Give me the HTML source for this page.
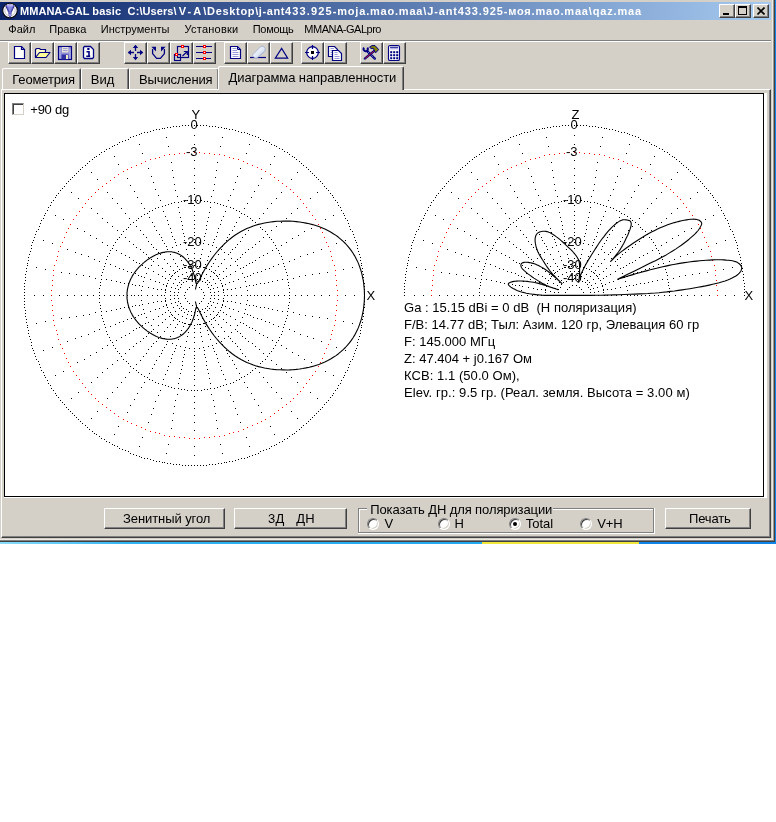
<!DOCTYPE html>
<html><head><meta charset="utf-8"><title>MMANA-GAL</title><style>
*{box-sizing:border-box}
html,body{margin:0;padding:0}
body{width:776px;height:822px;background:#fff;position:relative;overflow:hidden;font-family:"Liberation Sans",sans-serif;color:#000}
.a{position:absolute}
#desk{left:0;top:0;width:776px;height:544px;background:#0f85ea}
#win{left:0;top:0;width:775px;height:542px;background:#d4d0c8;will-change:transform}
#title{left:0;top:2px;width:771px;height:18px;background:linear-gradient(90deg,#0a246a,#a6caf0)}
.tt{top:3px;font-weight:bold;font-size:11px;line-height:16px;color:#fff;white-space:pre}
.cb{top:4px;width:16px;height:14px;background:#d4d0c8;border:1px solid;border-color:#fff #404040 #404040 #fff;box-shadow:inset -1px -1px 0 #808080}
.menu{top:21.5px;font-size:11px;line-height:14px;white-space:pre}
.tb{top:42px;width:23px;height:22px;background:#d4d0c8;border:1px solid;border-color:#fff #404040 #404040 #fff;box-shadow:inset -1px -1px 0 #808080}
.tab{font-size:13px;white-space:pre;line-height:15px}
.btn{background:#d4d0c8;border:1px solid;border-color:#fff #404040 #404040 #fff;box-shadow:inset -1px -1px 0 #808080}
.info{left:404px;font-size:13px;line-height:17px;white-space:pre}
.lbl{font-size:13px;line-height:13px;white-space:pre}
.radio{width:12px;height:12px;border-radius:50%;background:#fff;border:1px solid;border-color:#808080 #fff #fff #808080;box-shadow:inset 1px 1px 0 #404040,inset -1px -1px 0 #d4d0c8;transform:rotate(0deg)}
.rl{font-size:12px;line-height:14px;white-space:pre}
</style></head><body>
<div id="desk" class="a"></div>
<div class="a" style="left:0;top:542px;width:482px;height:2px;background:linear-gradient(90deg,#8adcf8 0,#30b4f4 130px,#22a8f0 482px)"></div>
<div class="a" style="left:482px;top:542px;width:157px;height:2px;background:#f0e63c"></div>
<div id="win" class="a">
<div class="a" style="left:771px;top:0;width:4px;height:542px;background:#d4d0c8"></div>
<div class="a" style="left:772px;top:0;width:1px;height:540px;background:#ece9e2"></div>
<div class="a" style="left:773px;top:0;width:1px;height:541px;background:#9c9890"></div>
<div class="a" style="left:774px;top:0;width:1px;height:542px;background:#404040"></div>
<div class="a" style="left:0;top:539px;width:773px;height:1px;background:#ece9e2"></div>
<div class="a" style="left:0;top:540px;width:774px;height:1px;background:#808080"></div>
<div class="a" style="left:0;top:541px;width:775px;height:1px;background:#404040"></div>
<div id="title" class="a"></div>
<svg class="a" style="left:2px;top:2px" width="17" height="18" viewBox="2 2 17 18"><circle cx="10" cy="10.6" r="7.3" fill="#fff" stroke="#0a0a14" stroke-width="1.1"/><circle cx="10" cy="10.6" r="5.2" fill="none" stroke="#b8b8c0" stroke-width=".9"/><path d="M5.8 6Q10 3.6 14.2 6L11.2 12.6L10.6 16.6H9.4L8.8 12.6Z" fill="#8a8ae6" stroke="#2a2a90" stroke-width=".9" stroke-linejoin="round"/><path d="M7 6.8L9.3 12M13 6.8L10.7 12" stroke="#3c3ca8" stroke-width=".7" fill="none"/><ellipse cx="10" cy="5.6" rx="3.2" ry="1" fill="#b4b4f4"/><circle cx="10" cy="15.2" r="1.1" fill="#9a9af0"/></svg>
<div class="a tt" style="left:20px;letter-spacing:0.039px">MMANA-GAL </div>
<div class="a tt" style="left:92.3px;letter-spacing:0.150px">basic  </div>
<div class="a tt" style="left:127.6px;letter-spacing:0.145px">C:</div>
<div class="a tt" style="left:139.5px;letter-spacing:0.060px">\Users</div>
<div class="a tt" style="left:173.5px;letter-spacing:2.098px">\V-A</div>
<div class="a tt" style="left:203.3px;letter-spacing:0.679px">\Desktop</div>
<div class="a tt" style="left:255.2px;letter-spacing:0.586px">\j-ant</div>
<div class="a tt" style="left:285px;letter-spacing:1.148px">433.925</div>
<div class="a tt" style="left:332.8px;letter-spacing:0.800px">-moja.mao.maa</div>
<div class="a tt" style="left:423.3px;letter-spacing:0.869px">\J-ant433.925</div>
<div class="a tt" style="left:503.7px;letter-spacing:0.808px">-моя.mao.maa</div>
<div class="a tt" style="left:588.8px;letter-spacing:0.841px">\qaz.maa</div>
<div class="a cb" style="left:719px"><div class="a" style="left:3px;top:8px;width:6px;height:2px;background:#000"></div></div>
<div class="a cb" style="left:735px"><div class="a" style="left:2px;top:1px;width:9px;height:9px;border:1px solid #000;border-top-width:2px"></div></div>
<div class="a cb" style="left:753px"><svg class="a" style="left:3px;top:2px" width="8" height="8" viewBox="0 0 8 8"><path d="M0.5 0.5 L7.5 7.5 M7.5 0.5 L0.5 7.5" stroke="#000" stroke-width="1.6"/></svg></div>
<div class="a menu" style="left:8.3px;letter-spacing:0.038px">Файл</div>
<div class="a menu" style="left:49.3px;letter-spacing:0.005px">Правка</div>
<div class="a menu" style="left:100.8px;letter-spacing:0.010px">Инструменты</div>
<div class="a menu" style="left:184.5px;letter-spacing:0.247px">Установки</div>
<div class="a menu" style="left:252.8px;letter-spacing:-0.333px">Помощь</div>
<div class="a menu" style="left:304.3px;letter-spacing:-0.486px">MMANA-GALpro</div>
<div class="a" style="left:0;top:40px;width:771px;height:1px;background:#808080"></div>
<div class="a" style="left:0;top:41px;width:771px;height:1px;background:#fff"></div>
<div class="a tb" style="left:8px"><svg class="a" style="left:-1px;top:-1px" width="23" height="22" viewBox="0 0 23 22"><path d="M6.5 4.5H13.5L16.5 7.5V16.5H6.5Z" fill="#fff" stroke="#000080" stroke-width="1.2"/><path d="M13.5 4.5V7.5H16.5" fill="none" stroke="#000080" stroke-width="1.2"/></svg></div>
<div class="a tb" style="left:31px"><svg class="a" style="left:-1px;top:-1px" width="23" height="22" viewBox="0 0 23 22"><path d="M4.5 15.5V7.5L5.5 6.5H8.5L9.5 7.5H14.5V10" fill="#ffffc8" stroke="#000080" stroke-width="1.2"/><path d="M4.5 15.5L8.5 10.5H19L15 15.5Z" fill="#ffff99" stroke="#000080" stroke-width="1.2" stroke-linejoin="round"/></svg></div>
<div class="a tb" style="left:54px"><svg class="a" style="left:-1px;top:-1px" width="23" height="22" viewBox="0 0 23 22"><rect x="4.5" y="4.5" width="13" height="13" fill="#8f8fd6" stroke="#000080" stroke-width="1.2"/><rect x="8" y="5" width="6.5" height="5.5" fill="#e6e2d6"/><path d="M9 6.5H13.5M9 8.5H13.5" stroke="#a0a0d8" stroke-width="1"/><rect x="7.5" y="12.5" width="7" height="5" fill="#3030a0"/><rect x="12" y="13" width="2" height="4" fill="#f0ecc8"/><path d="M6 5.5V16.5M16 7V16.5" stroke="#b8b8ec" stroke-width="1"/></svg></div>
<div class="a tb" style="left:77px"><svg class="a" style="left:-1px;top:-1px" width="23" height="22" viewBox="0 0 23 22"><path d="M7.5 4.5H13.5L16.5 7.5V15.5L15.5 16.5H7.5L6.5 15.5V5.5Z" fill="#fff" stroke="#000080" stroke-width="1.3"/><rect x="10.3" y="6" width="2.2" height="2" fill="#000080"/><path d="M9.5 9.7H12V14.2M9.3 14.3H13.2" stroke="#000080" stroke-width="1.6" fill="none"/></svg></div>
<div class="a tb" style="left:124px"><svg class="a" style="left:-1px;top:-1px" width="23" height="22" viewBox="0 0 23 22"><path d="M11.5 4V9M11.5 12V17M4.5 10.5H10M13 10.5H18.5" stroke="#000080" stroke-width="1.3" fill="none"/><path d="M11.5 2.8L14.2 6H8.8ZM11.5 18.2L14.2 15H8.8ZM3.8 10.5L7 7.8V13.2ZM19.2 10.5L16 7.8V13.2Z" fill="#000080"/></svg></div>
<div class="a tb" style="left:147px"><svg class="a" style="left:-1px;top:-1px" width="23" height="22" viewBox="0 0 23 22"><path d="M5.6 7V11.6L9.6 16.3H13.4L17.4 11.6V7" stroke="#000080" stroke-width="1.3" fill="none" stroke-linejoin="round"/><path d="M4.4 4.8H9V9.4ZM18.6 4.8H14V9.4Z" fill="#000080"/></svg></div>
<div class="a tb" style="left:170px"><svg class="a" style="left:-1px;top:-1px" width="23" height="22" viewBox="0 0 23 22"><rect x="7.5" y="4.5" width="11" height="11" fill="none" stroke="#000080" stroke-width="1.2"/><rect x="4.5" y="12.5" width="6" height="6" fill="none" stroke="#000080" stroke-width="1.2"/><path d="M12.5 14L17 9.8M13.8 9.5H17.3V13" stroke="#000080" stroke-width="1.2" fill="none"/><rect x="11.5" y="3.5" width="2" height="2" fill="#fff" stroke="#f00" stroke-width="1"/><rect x="5.5" y="11.5" width="2" height="2" fill="#fff" stroke="#f00" stroke-width="1"/></svg></div>
<div class="a tb" style="left:193px"><svg class="a" style="left:-1px;top:-1px" width="23" height="22" viewBox="0 0 23 22"><path d="M3 4.5H19M3 10.5H19M3 16.5H18" stroke="#000080" stroke-width="1.2"/><rect x="10.5" y="3.5" width="2" height="2" fill="#fff" stroke="#f00" stroke-width="1"/><rect x="10.5" y="9.5" width="2" height="2" fill="#fff" stroke="#f00" stroke-width="1"/><rect x="10.5" y="15.5" width="2" height="2" fill="#fff" stroke="#f00" stroke-width="1"/></svg></div>
<div class="a tb" style="left:224px"><svg class="a" style="left:-1px;top:-1px" width="23" height="22" viewBox="0 0 23 22"><path d="M6.5 4.5H13.5L16.5 7.5V16.5H6.5Z" fill="#fff" stroke="#000080" stroke-width="1.2"/><path d="M13.5 4.5V7.5H16.5" fill="none" stroke="#000080" stroke-width="1"/><path d="M8.5 6.5H12.5M8.5 8.5H13M8.5 10.5H14.5M8.5 12.5H14.5M8.5 14.5H14.5" stroke="#9898dc" stroke-width="1"/></svg></div>
<div class="a tb" style="left:247px"><svg class="a" style="left:-1px;top:-1px" width="23" height="22" viewBox="0 0 23 22"><defs><linearGradient id="er" x1="0" y1="0" x2="1" y2="1"><stop offset="0" stop-color="#fff"/><stop offset=".55" stop-color="#e0e8f6"/><stop offset="1" stop-color="#8fa4cc"/></linearGradient></defs><path d="M3 15.5H19" stroke="#000080" stroke-width="1.2"/><path d="M5.8 12.6L13.2 5Q15 3.6 16.8 4.8L18 6.4Q18.8 8 17.4 9.6L10.6 15.6Q9 16.6 7.4 15.6L6 14.4Q5.2 13.4 5.8 12.6Z" fill="url(#er)" stroke="#9cacd0" stroke-width=".8"/></svg></div>
<div class="a tb" style="left:270px"><svg class="a" style="left:-1px;top:-1px" width="23" height="22" viewBox="0 0 23 22"><path d="M11.6 6.4L17.7 16.1H5.3Z" fill="none" stroke="#000080" stroke-width="1.15"/></svg></div>
<div class="a tb" style="left:301px"><svg class="a" style="left:-1px;top:-1px" width="23" height="22" viewBox="0 0 23 22"><path d="M11.5 4.3L17.6 10.5L11.5 16.7L5.4 10.5Z" fill="#fff" stroke="#000080" stroke-width="1.2" stroke-linejoin="round"/><circle cx="11.5" cy="10.5" r="5.8" fill="#fff" stroke="#000080" stroke-width="1.2"/><path d="M11.5 3V7M11.5 14V18M4 10.5H8M15 10.5H19" stroke="#000080" stroke-width="1.2"/><rect x="10" y="9" width="3" height="3" fill="#000"/></svg></div>
<div class="a tb" style="left:324px"><svg class="a" style="left:-1px;top:-1px" width="23" height="22" viewBox="0 0 23 22"><path d="M4.5 4.5H10.5L13.5 7.5V14.5H4.5Z" fill="#fff" stroke="#000080" stroke-width="1.2"/><path d="M6.5 6.5H10M6.5 8.5H9M6.5 10.5H9M6.5 12.5H9" stroke="#9898dc" stroke-width="1"/><path d="M8.5 8.5H14.5L17.5 11.5V18.5H8.5Z" fill="#fff" stroke="#000080" stroke-width="1.2"/><path d="M10.5 10.5H13.5M10.5 12.5H13.5M10.5 14.5H15.5M10.5 16.5H15.5" stroke="#9898dc" stroke-width="1"/></svg></div>
<div class="a tb" style="left:360px"><svg class="a" style="left:-1px;top:-1px" width="23" height="22" viewBox="0 0 23 22"><path d="M7.2 9.2L14.8 16.6" stroke="#000080" stroke-width="2.4" stroke-linecap="round"/><path d="M8 10L14.6 16.4" stroke="#c8c8e8" stroke-width=".8" stroke-dasharray="1 1"/><path d="M4.1 5.7A2.1 2.1 0 1 0 7.3 5.7" stroke="#000080" stroke-width="1.9" fill="none"/><path d="M14.6 8.6L4.8 16.6" stroke="#000080" stroke-width="2.3" stroke-linecap="round"/><path d="M14.2 9L5 16.5" stroke="#d01030" stroke-width=".9"/><path d="M9.6 5.2L12 3.6H15L18.6 7.4L17 9.6L15.2 10.6L13.4 6.4L11 6.4Z" fill="#808000" stroke="#000080" stroke-width="1" stroke-linejoin="round"/></svg></div>
<div class="a tb" style="left:383px"><svg class="a" style="left:-1px;top:-1px" width="23" height="22" viewBox="0 0 23 22"><rect x="5.5" y="3.5" width="11" height="15" rx="1.6" fill="#fff" stroke="#000080" stroke-width="1.15"/><rect x="7.2" y="5.2" width="7.8" height="2.2" fill="#b0b0e8"/><path d="M7 5.2H15.2" stroke="#000080" stroke-width="1"/><rect x="7.2" y="9.2" width="2" height="2" fill="#000080"/><rect x="7.2" y="12.2" width="2" height="2" fill="#000080"/><rect x="7.2" y="15.2" width="2" height="2" fill="#000080"/><rect x="10.2" y="9.2" width="2" height="2" fill="#000080"/><rect x="10.2" y="12.2" width="2" height="2" fill="#000080"/><rect x="10.2" y="15.2" width="2" height="2" fill="#000080"/><rect x="13.2" y="9.2" width="2" height="2" fill="#000080"/><rect x="13.2" y="12.2" width="2" height="2" fill="#000080"/><rect x="13.2" y="15.2" width="2" height="2" fill="#000080"/></svg></div>
<div class="a" id="tabs"></div>
<div class="a" style="left:1px;top:89px;width:770px;height:449px;border:1px solid;border-color:#fff #404040 #404040 #fff;box-shadow:inset -1px -1px 0 #808080"></div>
<div class="a" style="left:2px;top:68px;width:79px;height:21px;background:#d4d0c8;border:1px solid;border-color:#fff #404040 #d4d0c8 #fff;border-bottom:0;border-radius:2px 2px 0 0;box-shadow:inset -1px 0 0 #808080"></div><div class="a tab" style="left:0px;top:0px"></div>
<div class="a tab" style="left:12.3px;top:71.6px;letter-spacing:-0.151px">Геометрия</div>
<div class="a" style="left:81px;top:68px;width:48px;height:21px;background:#d4d0c8;border:1px solid;border-color:#fff #404040 #d4d0c8 #fff;border-bottom:0;border-radius:2px 2px 0 0;box-shadow:inset -1px 0 0 #808080"></div><div class="a tab" style="left:0px;top:0px"></div>
<div class="a tab" style="left:90.8px;top:71.6px;letter-spacing:0.056px">Вид</div>
<div class="a" style="left:129px;top:68px;width:90px;height:21px;background:#d4d0c8;border:1px solid;border-color:#fff #404040 #d4d0c8 #fff;border-bottom:0;border-radius:2px 2px 0 0;box-shadow:inset -1px 0 0 #808080"></div><div class="a tab" style="left:0px;top:0px"></div>
<div class="a tab" style="left:139px;top:71.6px;letter-spacing:-0.136px">Вычисления</div>
<div class="a" style="left:218px;top:66px;width:186px;height:24px;background:#d4d0c8;border:1px solid;border-color:#fff #404040 #d4d0c8 #fff;border-bottom:0;border-radius:2px 2px 0 0;box-shadow:inset -1px 0 0 #808080"></div><div class="a tab" style="left:0px;top:0px"></div>
<div class="a tab" style="left:228.6px;top:70.2px;letter-spacing:-0.094px">Диаграмма направленности</div>
<div class="a" style="left:4px;top:93px;width:763px;height:405px;background:#fff"></div>
<div class="a" style="left:4px;top:93px;width:760px;height:404px;border:1px solid #000"></div>
<div class="a" style="left:5px;top:94px;width:758px;height:402px"><svg id="plot" width="758" height="402" viewBox="5 94 758 402" shape-rendering="crispEdges">
<path d="M364 295h1M364 292h1M364 289h1M364 286h1M364 283h1M363 280h1M363 277h1M363 274h1M362 271h1M362 268h1M361 265h1M361 263h1M360 260h1M360 257h1M359 254h1M358 251h1M357 248h1M357 245h1M356 242h1M355 240h1M354 237h1M353 234h1M352 231h1M350 229h1M349 226h1M348 223h1M347 220h1M345 218h1M344 215h1M343 213h1M341 210h1M340 207h1M338 205h1M337 202h1M335 200h1M333 197h1M332 195h1M330 193h1M328 190h1M326 188h1M324 186h1M322 183h1M320 181h1M318 179h1M316 177h1M314 175h1M312 173h1M310 171h1M308 169h1M306 167h1M303 165h1M301 163h1M299 161h1M296 159h1M294 157h1M292 156h1M289 154h1M287 152h1M284 151h1M282 149h1M279 148h1M276 146h1M274 145h1M271 144h1M269 142h1M266 141h1M263 140h1M260 139h1M258 137h1M255 136h1M252 135h1M249 134h1M247 133h1M244 132h1M241 132h1M238 131h1M235 130h1M232 129h1M229 129h1M226 128h1M224 128h1M221 127h1M218 127h1M215 126h1M212 126h1M209 126h1M206 125h1M203 125h1M200 125h1M197 125h1M194 125h1M191 125h1M188 125h1M185 125h1M182 125h1M179 126h1M176 126h1M173 126h1M170 127h1M167 127h1M164 128h1M162 128h1M159 129h1M156 129h1M153 130h1M150 131h1M147 132h1M144 132h1M141 133h1M139 134h1M136 135h1M133 136h1M130 137h1M128 139h1M125 140h1M122 141h1M119 142h1M117 144h1M114 145h1M112 146h1M109 148h1M106 149h1M104 151h1M101 152h1M99 154h1M96 156h1M94 157h1M92 159h1M89 161h1M87 163h1M85 165h1M82 167h1M80 169h1M78 171h1M76 173h1M74 175h1M72 177h1M70 179h1M68 181h1M66 183h1M64 186h1M62 188h1M60 190h1M58 193h1M56 195h1M55 197h1M53 200h1M51 202h1M50 205h1M48 207h1M47 210h1M45 213h1M44 215h1M43 218h1M41 220h1M40 223h1M39 226h1M38 229h1M36 231h1M35 234h1M34 237h1M33 240h1M32 242h1M31 245h1M31 248h1M30 251h1M29 254h1M28 257h1M28 260h1M27 263h1M27 265h1M26 268h1M26 271h1M25 274h1M25 277h1M25 280h1M24 283h1M24 286h1M24 289h1M24 292h1M24 295h1M24 298h1M24 301h1M24 304h1M24 307h1M25 310h1M25 313h1M25 316h1M26 319h1M26 322h1M27 325h1M27 327h1M28 330h1M28 333h1M29 336h1M30 339h1M31 342h1M31 345h1M32 348h1M33 350h1M34 353h1M35 356h1M36 359h1M38 361h1M39 364h1M40 367h1M41 370h1M43 372h1M44 375h1M45 377h1M47 380h1M48 383h1M50 385h1M51 388h1M53 390h1M55 393h1M56 395h1M58 397h1M60 400h1M62 402h1M64 404h1M66 407h1M68 409h1M70 411h1M72 413h1M74 415h1M76 417h1M78 419h1M80 421h1M82 423h1M85 425h1M87 427h1M89 429h1M92 431h1M94 433h1M96 434h1M99 436h1M101 438h1M104 439h1M106 441h1M109 442h1M112 444h1M114 445h1M117 446h1M119 448h1M122 449h1M125 450h1M128 451h1M130 453h1M133 454h1M136 455h1M139 456h1M141 457h1M144 458h1M147 458h1M150 459h1M153 460h1M156 461h1M159 461h1M162 462h1M164 462h1M167 463h1M170 463h1M173 464h1M176 464h1M179 464h1M182 465h1M185 465h1M188 465h1M191 465h1M194 465h1M197 465h1M200 465h1M203 465h1M206 465h1M209 464h1M212 464h1M215 464h1M218 463h1M221 463h1M224 462h1M226 462h1M229 461h1M232 461h1M235 460h1M238 459h1M241 458h1M244 458h1M247 457h1M249 456h1M252 455h1M255 454h1M258 453h1M260 451h1M263 450h1M266 449h1M269 448h1M271 446h1M274 445h1M276 444h1M279 442h1M282 441h1M284 439h1M287 438h1M289 436h1M292 434h1M294 433h1M296 431h1M299 429h1M301 427h1M303 425h1M306 423h1M308 421h1M310 419h1M312 417h1M314 415h1M316 413h1M318 411h1M320 409h1M322 407h1M324 404h1M326 402h1M328 400h1M330 397h1M332 395h1M333 393h1M335 390h1M337 388h1M338 385h1M340 383h1M341 380h1M343 377h1M344 375h1M345 372h1M347 370h1M348 367h1M349 364h1M350 361h1M352 359h1M353 356h1M354 353h1M355 350h1M356 348h1M357 345h1M357 342h1M358 339h1M359 336h1M360 333h1M360 330h1M361 327h1M361 325h1M362 322h1M362 319h1M363 316h1M363 313h1M363 310h1M364 307h1M364 304h1M364 301h1M364 298h1M289 295h1M289 292h1M289 288h1M288 285h1M288 282h1M287 279h1M287 275h1M286 272h1M285 269h1M284 266h1M283 263h1M282 259h1M281 256h1M279 253h1M278 250h1M276 248h1M275 245h1M273 242h1M271 239h1M269 237h1M267 234h1M265 231h1M262 229h1M260 227h1M258 224h1M255 222h1M252 220h1M250 218h1M247 216h1M244 214h1M241 213h1M239 211h1M236 210h1M233 208h1M230 207h1M226 206h1M223 205h1M220 204h1M217 203h1M214 202h1M210 202h1M207 201h1M204 201h1M201 200h1M197 200h1M194 200h1M191 200h1M187 200h1M184 201h1M181 201h1M178 202h1M174 202h1M171 203h1M168 204h1M165 205h1M162 206h1M158 207h1M155 208h1M152 210h1M149 211h1M147 213h1M144 214h1M141 216h1M138 218h1M136 220h1M133 222h1M130 224h1M128 227h1M126 229h1M123 231h1M121 234h1M119 237h1M117 239h1M115 242h1M113 245h1M112 248h1M110 250h1M109 253h1M107 256h1M106 259h1M105 263h1M104 266h1M103 269h1M102 272h1M101 275h1M101 279h1M100 282h1M100 285h1M99 288h1M99 292h1M99 295h1M99 298h1M99 302h1M100 305h1M100 308h1M101 311h1M101 315h1M102 318h1M103 321h1M104 324h1M105 327h1M106 331h1M107 334h1M109 337h1M110 340h1M112 342h1M113 345h1M115 348h1M117 351h1M119 353h1M121 356h1M123 359h1M126 361h1M128 363h1M130 366h1M133 368h1M136 370h1M138 372h1M141 374h1M144 376h1M147 377h1M149 379h1M152 380h1M155 382h1M158 383h1M162 384h1M165 385h1M168 386h1M171 387h1M174 388h1M178 388h1M181 389h1M184 389h1M187 390h1M191 390h1M194 390h1M197 390h1M201 390h1M204 389h1M207 389h1M210 388h1M214 388h1M217 387h1M220 386h1M223 385h1M226 384h1M230 383h1M233 382h1M236 380h1M239 379h1M241 377h1M244 376h1M247 374h1M250 372h1M252 370h1M255 368h1M258 366h1M260 363h1M262 361h1M265 359h1M267 356h1M269 353h1M271 351h1M273 348h1M275 345h1M276 342h1M278 340h1M279 337h1M281 334h1M282 331h1M283 327h1M284 324h1M285 321h1M286 318h1M287 315h1M287 311h1M288 308h1M288 305h1M289 302h1M289 298h1M247 295h1M247 290h1M246 286h1M245 281h1M244 277h1M242 273h1M240 268h1M237 265h1M235 261h1M231 258h1M228 254h1M224 252h1M221 249h1M216 247h1M212 245h1M208 244h1M203 243h1M199 242h1M194 242h1M189 242h1M185 243h1M180 244h1M176 245h1M172 247h1M167 249h1M164 252h1M160 254h1M157 258h1M153 261h1M151 265h1M148 268h1M146 273h1M144 277h1M143 281h1M142 286h1M141 290h1M141 295h1M141 300h1M142 304h1M143 309h1M144 313h1M146 317h1M148 322h1M151 325h1M153 329h1M157 332h1M160 336h1M164 338h1M167 341h1M172 343h1M176 345h1M180 346h1M185 347h1M189 348h1M194 348h1M199 348h1M203 347h1M208 346h1M212 345h1M216 343h1M221 341h1M224 338h1M228 336h1M231 332h1M235 329h1M237 325h1M240 322h1M242 317h1M244 313h1M245 309h1M246 304h1M247 300h1M224 295h1M223 292h1M223 289h1M222 286h1M221 283h1M220 280h1M218 278h1M216 275h1M214 273h1M211 271h1M209 269h1M206 268h1M203 267h1M200 266h1M197 266h1M194 265h1M191 266h1M188 266h1M185 267h1M182 268h1M179 269h1M177 271h1M174 273h1M172 275h1M170 278h1M168 280h1M167 283h1M166 286h1M165 289h1M165 292h1M164 295h1M165 298h1M165 301h1M166 304h1M167 307h1M168 310h1M170 312h1M172 315h1M174 317h1M177 319h1M179 321h1M182 322h1M185 323h1M188 324h1M191 324h1M194 325h1M197 324h1M200 324h1M203 323h1M206 322h1M209 321h1M211 319h1M214 317h1M216 315h1M218 312h1M220 310h1M221 307h1M222 304h1M223 301h1M223 298h1M211 295h1M210 292h1M210 289h1M208 287h1M207 284h1M205 282h1M202 281h1M200 279h1M197 279h1M194 278h1M191 279h1M188 279h1M186 281h1M183 282h1M181 284h1M180 287h1M178 289h1M178 292h1M177 295h1M178 298h1M178 301h1M180 303h1M181 306h1M183 308h1M186 309h1M188 311h1M191 311h1M194 312h1M197 311h1M200 311h1M202 309h1M205 308h1M207 306h1M208 303h1M210 301h1M210 298h1M204 295h1M203 292h1M201 289h1M199 287h1M196 285h1M192 285h1M189 287h1M187 289h1M185 292h1M184 295h1M185 298h1M187 301h1M189 303h1M192 305h1M196 305h1M199 303h1M201 301h1M203 298h1M354 295h1M345 295h1M337 295h1M329 295h1M321 295h1M314 295h1M307 295h1M301 295h1M295 295h1M284 295h1M278 295h1M274 295h1M269 295h1M265 295h1M261 295h1M257 295h1M254 295h1M250 295h1M241 295h1M236 295h1M231 295h1M227 295h1M218 295h1M214 295h1M352 267h1M343 269h1M335 270h1M327 272h1M319 273h1M312 274h1M305 275h1M299 276h1M293 278h1M282 279h1M277 280h1M272 281h1M268 282h1M264 283h1M260 283h1M256 284h1M253 285h1M249 285h1M240 287h1M235 288h1M231 289h1M227 289h1M223 290h1M218 291h1M214 292h1M345 240h1M336 243h1M328 246h1M321 249h1M313 252h1M307 254h1M300 256h1M294 259h1M289 261h1M278 264h1M273 266h1M269 268h1M265 269h1M261 271h1M257 272h1M253 273h1M250 275h1M247 276h1M238 279h1M233 281h1M229 282h1M225 284h1M222 285h1M217 287h1M213 288h1M333 215h1M325 219h1M318 224h1M311 228h1M304 231h1M298 235h1M292 238h1M286 242h1M281 245h1M272 250h1M267 253h1M263 255h1M259 257h1M255 260h1M252 262h1M249 263h1M246 265h1M243 267h1M235 271h1M230 274h1M226 276h1M223 278h1M215 283h1M211 285h1M317 192h1M310 198h1M303 203h1M297 208h1M291 213h1M286 218h1M281 222h1M276 226h1M271 230h1M263 237h1M259 241h1M255 244h1M252 247h1M248 249h1M245 252h1M242 254h1M240 257h1M237 259h1M230 265h1M226 268h1M223 271h1M219 274h1M217 276h1M213 279h1M209 282h1M297 172h1M291 179h1M286 186h1M281 192h1M276 198h1M271 203h1M267 208h1M263 213h1M259 218h1M252 226h1M248 230h1M245 234h1M242 237h1M240 241h1M237 244h1M235 247h1M232 249h1M230 252h1M224 259h1M221 263h1M218 266h1M215 270h1M213 272h1M210 276h1M207 280h1M274 156h1M270 164h1M265 171h1M261 178h1M258 185h1M254 191h1M251 197h1M247 203h1M244 208h1M239 217h1M236 222h1M234 226h1M232 230h1M229 234h1M227 237h1M226 240h1M224 243h1M222 246h1M218 254h1M215 259h1M213 263h1M211 266h1M206 274h1M204 278h1M249 144h1M246 153h1M243 161h1M240 168h1M237 176h1M235 182h1M233 189h1M230 195h1M228 200h1M225 211h1M223 216h1M221 220h1M220 224h1M218 228h1M217 232h1M216 236h1M214 239h1M213 242h1M210 251h1M208 256h1M207 260h1M205 264h1M204 267h1M202 272h1M201 276h1M222 137h1M220 146h1M219 154h1M217 162h1M216 170h1M215 177h1M214 184h1M213 190h1M211 196h1M210 207h1M209 212h1M208 217h1M207 221h1M206 225h1M206 229h1M205 233h1M204 236h1M204 240h1M202 249h1M201 254h1M200 258h1M200 262h1M199 266h1M198 271h1M197 275h1M194 135h1M194 144h1M194 152h1M194 160h1M194 168h1M194 175h1M194 182h1M194 188h1M194 194h1M194 205h1M194 211h1M194 215h1M194 220h1M194 224h1M194 228h1M194 232h1M194 235h1M194 239h1M194 248h1M194 253h1M194 258h1M194 262h1M194 271h1M194 275h1M166 137h1M168 146h1M169 154h1M171 162h1M172 170h1M173 177h1M174 184h1M175 190h1M177 196h1M178 207h1M179 212h1M180 217h1M181 221h1M182 225h1M182 229h1M183 233h1M184 236h1M184 240h1M186 249h1M187 254h1M188 258h1M188 262h1M189 266h1M190 271h1M191 275h1M139 144h1M142 153h1M145 161h1M148 168h1M151 176h1M153 182h1M155 189h1M158 195h1M160 200h1M163 211h1M165 216h1M167 220h1M168 224h1M170 228h1M171 232h1M172 236h1M174 239h1M175 242h1M178 251h1M180 256h1M181 260h1M183 264h1M184 267h1M186 272h1M187 276h1M114 156h1M118 164h1M123 171h1M127 178h1M130 185h1M134 191h1M137 197h1M141 203h1M144 208h1M149 217h1M152 222h1M154 226h1M156 230h1M159 234h1M161 237h1M162 240h1M164 243h1M166 246h1M170 254h1M173 259h1M175 263h1M177 266h1M182 274h1M184 278h1M91 172h1M97 179h1M102 186h1M107 192h1M112 198h1M117 203h1M121 208h1M125 213h1M129 218h1M136 226h1M140 230h1M143 234h1M146 237h1M148 241h1M151 244h1M153 247h1M156 249h1M158 252h1M164 259h1M167 263h1M170 266h1M173 270h1M175 272h1M178 276h1M181 280h1M71 192h1M78 198h1M85 203h1M91 208h1M97 213h1M102 218h1M107 222h1M112 226h1M117 230h1M125 237h1M129 241h1M133 244h1M136 247h1M140 249h1M143 252h1M146 254h1M148 257h1M151 259h1M158 265h1M162 268h1M165 271h1M169 274h1M171 276h1M175 279h1M179 282h1M55 215h1M63 219h1M70 224h1M77 228h1M84 231h1M90 235h1M96 238h1M102 242h1M107 245h1M116 250h1M121 253h1M125 255h1M129 257h1M133 260h1M136 262h1M139 263h1M142 265h1M145 267h1M153 271h1M158 274h1M162 276h1M165 278h1M173 283h1M177 285h1M43 240h1M52 243h1M60 246h1M67 249h1M75 252h1M81 254h1M88 256h1M94 259h1M99 261h1M110 264h1M115 266h1M119 268h1M123 269h1M127 271h1M131 272h1M135 273h1M138 275h1M141 276h1M150 279h1M155 281h1M159 282h1M163 284h1M166 285h1M171 287h1M175 288h1M36 267h1M45 269h1M53 270h1M61 272h1M69 273h1M76 274h1M83 275h1M89 276h1M95 278h1M106 279h1M111 280h1M116 281h1M120 282h1M124 283h1M128 283h1M132 284h1M135 285h1M139 285h1M148 287h1M153 288h1M157 289h1M161 289h1M165 290h1M170 291h1M174 292h1M34 295h1M43 295h1M51 295h1M59 295h1M67 295h1M74 295h1M81 295h1M87 295h1M93 295h1M104 295h1M110 295h1M114 295h1M119 295h1M123 295h1M127 295h1M131 295h1M134 295h1M138 295h1M147 295h1M152 295h1M157 295h1M161 295h1M170 295h1M174 295h1M36 323h1M45 321h1M53 320h1M61 318h1M69 317h1M76 316h1M83 315h1M89 314h1M95 312h1M106 311h1M111 310h1M116 309h1M120 308h1M124 307h1M128 307h1M132 306h1M135 305h1M139 305h1M148 303h1M153 302h1M157 301h1M161 301h1M165 300h1M170 299h1M174 298h1M43 350h1M52 347h1M60 344h1M67 341h1M75 338h1M81 336h1M88 334h1M94 331h1M99 329h1M110 326h1M115 324h1M119 322h1M123 321h1M127 319h1M131 318h1M135 317h1M138 315h1M141 314h1M150 311h1M155 309h1M159 308h1M163 306h1M166 305h1M171 303h1M175 302h1M55 375h1M63 371h1M70 366h1M77 362h1M84 359h1M90 355h1M96 352h1M102 348h1M107 345h1M116 340h1M121 337h1M125 335h1M129 333h1M133 330h1M136 328h1M139 327h1M142 325h1M145 323h1M153 319h1M158 316h1M162 314h1M165 312h1M173 307h1M177 305h1M71 398h1M78 392h1M85 387h1M91 382h1M97 377h1M102 372h1M107 368h1M112 364h1M117 360h1M125 353h1M129 349h1M133 346h1M136 343h1M140 341h1M143 338h1M146 336h1M148 333h1M151 331h1M158 325h1M162 322h1M165 319h1M169 316h1M171 314h1M175 311h1M179 308h1M91 418h1M97 411h1M102 404h1M107 398h1M112 392h1M117 387h1M121 382h1M125 377h1M129 372h1M136 364h1M140 360h1M143 356h1M146 353h1M148 349h1M151 346h1M153 343h1M156 341h1M158 338h1M164 331h1M167 327h1M170 324h1M173 320h1M175 318h1M178 314h1M181 310h1M114 434h1M118 426h1M123 419h1M127 412h1M130 405h1M134 399h1M137 393h1M141 387h1M144 382h1M149 373h1M152 368h1M154 364h1M156 360h1M159 356h1M161 353h1M162 350h1M164 347h1M166 344h1M170 336h1M173 331h1M175 327h1M177 324h1M182 316h1M184 312h1M139 446h1M142 437h1M145 429h1M148 422h1M151 414h1M153 408h1M155 401h1M158 395h1M160 390h1M163 379h1M165 374h1M167 370h1M168 366h1M170 362h1M171 358h1M172 354h1M174 351h1M175 348h1M178 339h1M180 334h1M181 330h1M183 326h1M184 323h1M186 318h1M187 314h1M166 453h1M168 444h1M169 436h1M171 428h1M172 420h1M173 413h1M174 406h1M175 400h1M177 394h1M178 383h1M179 378h1M180 373h1M181 369h1M182 365h1M182 361h1M183 357h1M184 354h1M184 350h1M186 341h1M187 336h1M188 332h1M188 328h1M189 324h1M190 319h1M191 315h1M194 455h1M194 446h1M194 438h1M194 430h1M194 422h1M194 415h1M194 408h1M194 402h1M194 396h1M194 385h1M194 379h1M194 375h1M194 370h1M194 366h1M194 362h1M194 358h1M194 355h1M194 351h1M194 342h1M194 337h1M194 332h1M194 328h1M194 319h1M194 315h1M222 453h1M220 444h1M219 436h1M217 428h1M216 420h1M215 413h1M214 406h1M213 400h1M211 394h1M210 383h1M209 378h1M208 373h1M207 369h1M206 365h1M206 361h1M205 357h1M204 354h1M204 350h1M202 341h1M201 336h1M200 332h1M200 328h1M199 324h1M198 319h1M197 315h1M249 446h1M246 437h1M243 429h1M240 422h1M237 414h1M235 408h1M233 401h1M230 395h1M228 390h1M225 379h1M223 374h1M221 370h1M220 366h1M218 362h1M217 358h1M216 354h1M214 351h1M213 348h1M210 339h1M208 334h1M207 330h1M205 326h1M204 323h1M202 318h1M201 314h1M274 434h1M270 426h1M265 419h1M261 412h1M258 405h1M254 399h1M251 393h1M247 387h1M244 382h1M239 373h1M236 368h1M234 364h1M232 360h1M229 356h1M227 353h1M226 350h1M224 347h1M222 344h1M218 336h1M215 331h1M213 327h1M211 324h1M206 316h1M204 312h1M297 418h1M291 411h1M286 404h1M281 398h1M276 392h1M271 387h1M267 382h1M263 377h1M259 372h1M252 364h1M248 360h1M245 356h1M242 353h1M240 349h1M237 346h1M235 343h1M232 341h1M230 338h1M224 331h1M221 327h1M218 324h1M215 320h1M213 318h1M210 314h1M207 310h1M317 398h1M310 392h1M303 387h1M297 382h1M291 377h1M286 372h1M281 368h1M276 364h1M271 360h1M263 353h1M259 349h1M255 346h1M252 343h1M248 341h1M245 338h1M242 336h1M240 333h1M237 331h1M230 325h1M226 322h1M223 319h1M219 316h1M217 314h1M213 311h1M209 308h1M333 375h1M325 371h1M318 366h1M311 362h1M304 359h1M298 355h1M292 352h1M286 348h1M281 345h1M272 340h1M267 337h1M263 335h1M259 333h1M255 330h1M252 328h1M249 327h1M246 325h1M243 323h1M235 319h1M230 316h1M226 314h1M223 312h1M215 307h1M211 305h1M345 350h1M336 347h1M328 344h1M321 341h1M313 338h1M307 336h1M300 334h1M294 331h1M289 329h1M278 326h1M273 324h1M269 322h1M265 321h1M261 319h1M257 318h1M253 317h1M250 315h1M247 314h1M238 311h1M233 309h1M229 308h1M225 306h1M222 305h1M217 303h1M213 302h1M352 323h1M343 321h1M335 320h1M327 318h1M319 317h1M312 316h1M305 315h1M299 314h1M293 312h1M282 311h1M277 310h1M272 309h1M268 308h1M264 307h1M260 307h1M256 306h1M253 305h1M249 305h1M240 303h1M235 302h1M231 301h1M227 301h1M223 300h1M218 299h1M214 298h1" stroke="#000" stroke-width="1" fill="none" transform="translate(0,.5)"/>
<path d="M337 295h1M337 290h1M336 285h1M336 280h1M335 275h1M335 270h1M334 265h1M332 260h1M331 256h1M330 251h1M328 246h1M326 242h1M324 237h1M322 232h1M320 228h1M318 224h1M315 219h1M312 215h1M309 211h1M306 207h1M303 203h1M300 199h1M297 196h1M293 192h1M290 189h1M286 186h1M282 183h1M278 180h1M274 177h1M270 174h1M265 171h1M261 169h1M257 167h1M252 165h1M247 163h1M243 161h1M238 159h1M233 158h1M229 157h1M224 155h1M219 154h1M214 154h1M209 153h1M204 153h1M199 152h1M194 152h1M189 152h1M184 153h1M179 153h1M174 154h1M169 154h1M164 155h1M159 157h1M155 158h1M150 159h1M145 161h1M141 163h1M136 165h1M131 167h1M127 169h1M123 171h1M118 174h1M114 177h1M110 180h1M106 183h1M102 186h1M98 189h1M95 192h1M91 196h1M88 199h1M85 203h1M82 207h1M79 211h1M76 215h1M73 219h1M70 224h1M68 228h1M66 232h1M64 237h1M62 242h1M60 246h1M58 251h1M57 256h1M56 260h1M54 265h1M53 270h1M53 275h1M52 280h1M52 285h1M51 290h1M51 295h1M51 300h1M52 305h1M52 310h1M53 315h1M53 320h1M54 325h1M56 330h1M57 334h1M58 339h1M60 344h1M62 348h1M64 353h1M66 358h1M68 362h1M70 366h1M73 371h1M76 375h1M79 379h1M82 383h1M85 387h1M88 391h1M91 394h1M95 398h1M98 401h1M102 404h1M106 407h1M110 410h1M114 413h1M118 416h1M123 419h1M127 421h1M131 423h1M136 425h1M141 427h1M145 429h1M150 431h1M155 432h1M159 433h1M164 435h1M169 436h1M174 436h1M179 437h1M184 437h1M189 438h1M194 438h1M199 438h1M204 437h1M209 437h1M214 436h1M219 436h1M224 435h1M229 433h1M233 432h1M238 431h1M243 429h1M247 427h1M252 425h1M257 423h1M261 421h1M265 419h1M270 416h1M274 413h1M278 410h1M282 407h1M286 404h1M290 401h1M293 398h1M297 394h1M300 391h1M303 387h1M306 383h1M309 379h1M312 375h1M315 371h1M318 366h1M320 362h1M322 358h1M324 353h1M326 348h1M328 344h1M330 339h1M331 334h1M332 330h1M334 325h1M335 320h1M335 315h1M336 310h1M336 305h1M337 300h1" stroke="#f00" stroke-width="1" fill="none" transform="translate(0,.5)"/>
<polyline points="364.5,295.5 364.4,292.5 364.3,289.6 364.0,286.6 363.7,283.7 363.3,280.7 362.7,277.8 362.1,274.9 361.4,272.1 360.5,269.2 359.5,266.4 358.5,263.6 357.3,260.9 355.9,258.2 354.5,255.6 352.9,253.0 351.3,250.6 349.4,248.1 347.5,245.8 345.4,243.5 343.2,241.4 340.9,239.3 338.5,237.3 336.0,235.4 333.3,233.7 330.6,232.0 327.8,230.5 324.8,229.1 321.8,227.8 318.8,226.6 315.7,225.6 312.5,224.6 309.3,223.8 306.0,223.1 302.8,222.5 299.5,222.0 296.2,221.6 292.9,221.3 289.7,221.1 286.4,221.0 283.2,221.1 280.0,221.2 276.9,221.3 273.7,221.6 270.6,222.0 267.5,222.5 264.5,223.0 261.5,223.7 258.5,224.4 255.5,225.3 252.6,226.3 249.7,227.4 246.8,228.6 243.9,230.0 241.0,231.5 238.1,233.2 235.3,235.0 232.5,237.0 229.7,239.2 226.9,241.6 224.2,244.1 221.5,246.8 218.9,249.6 216.4,252.5 214.0,255.5 211.7,258.6 209.5,261.8 207.5,264.9 205.6,267.9 204.0,270.8 202.5,273.6 201.2,276.1 200.1,278.3 199.2,280.2 198.5,281.6 197.9,282.7 197.5,283.3 197.3,283.5 197.1,283.4 196.9,283.0 196.9,283.0 196.6,283.4 196.4,283.5 196.2,283.4 196.0,283.1 195.9,282.5 195.7,281.8 195.5,281.0 195.3,280.0 195.1,278.9 194.8,277.7 194.5,276.5 194.1,275.2 193.7,273.8 193.3,272.5 192.8,271.2 192.3,269.8 191.7,268.5 191.0,267.2 190.3,265.9 189.6,264.6 188.8,263.4 188.0,262.3 187.2,261.2 186.3,260.1 185.4,259.1 184.5,258.2 183.6,257.3 182.6,256.5 181.6,255.8 180.6,255.1 179.6,254.5 178.6,254.0 177.5,253.5 176.5,253.1 175.5,252.7 174.4,252.4 173.4,252.2 172.3,252.0 171.3,251.8 170.3,251.8 169.2,251.7 168.2,251.7 167.2,251.8 166.2,251.9 165.2,252.0 164.2,252.2 163.2,252.4 162.2,252.6 161.2,252.9 160.2,253.2 159.2,253.5 158.3,253.8 157.3,254.2 156.4,254.6 155.5,255.1 154.5,255.5 153.6,256.0 152.7,256.5 151.8,257.0 150.9,257.6 150.0,258.1 149.1,258.7 148.2,259.3 147.3,259.9 146.4,260.6 145.6,261.2 144.7,261.9 143.9,262.6 143.0,263.3 142.2,264.1 141.4,264.8 140.6,265.6 139.8,266.4 139.0,267.2 138.2,268.0 137.5,268.9 136.7,269.8 136.0,270.7 135.3,271.6 134.6,272.5 134.0,273.5 133.3,274.4 132.7,275.4 132.1,276.4 131.6,277.5 131.0,278.5 130.5,279.6 130.1,280.6 129.6,281.7 129.2,282.8 128.8,283.9 128.5,285.0 128.2,286.2 127.9,287.3 127.6,288.5 127.4,289.6 127.3,290.8 127.1,292.0 127.0,293.1 127.0,294.3 127.0,295.5" stroke="#000" stroke-width="1.1" fill="none" shape-rendering="geometricPrecision" stroke-linejoin="round"/>
<polyline points="196.9,283.0 195.4,289.5" stroke="#000" stroke-width="1.1" fill="none" shape-rendering="geometricPrecision" stroke-linejoin="round"/>
<polyline points="364.5,295.5 364.4,298.5 364.3,301.4 364.0,304.4 363.7,307.3 363.3,310.3 362.7,313.2 362.1,316.1 361.4,318.9 360.5,321.8 359.5,324.6 358.5,327.4 357.3,330.1 355.9,332.8 354.5,335.4 352.9,338.0 351.3,340.4 349.4,342.9 347.5,345.2 345.4,347.5 343.2,349.6 340.9,351.7 338.5,353.7 336.0,355.6 333.3,357.3 330.6,359.0 327.8,360.5 324.8,361.9 321.8,363.2 318.8,364.4 315.7,365.4 312.5,366.4 309.3,367.2 306.0,367.9 302.8,368.5 299.5,369.0 296.2,369.4 292.9,369.7 289.7,369.9 286.4,370.0 283.2,369.9 280.0,369.8 276.9,369.7 273.7,369.4 270.6,369.0 267.5,368.5 264.5,368.0 261.5,367.3 258.5,366.6 255.5,365.7 252.6,364.7 249.7,363.6 246.8,362.4 243.9,361.0 241.0,359.5 238.1,357.8 235.3,356.0 232.5,354.0 229.7,351.8 226.9,349.4 224.2,346.9 221.5,344.2 218.9,341.4 216.4,338.5 214.0,335.5 211.7,332.4 209.5,329.2 207.5,326.1 205.6,323.1 204.0,320.2 202.5,317.4 201.2,314.9 200.1,312.7 199.2,310.8 198.5,309.4 197.9,308.3 197.5,307.7 197.3,307.5 197.1,307.6 196.9,308.0 196.9,308.0 196.6,307.6 196.4,307.5 196.2,307.6 196.0,307.9 195.9,308.5 195.7,309.2 195.5,310.0 195.3,311.0 195.1,312.1 194.8,313.3 194.5,314.5 194.1,315.8 193.7,317.2 193.3,318.5 192.8,319.8 192.3,321.2 191.7,322.5 191.0,323.8 190.3,325.1 189.6,326.4 188.8,327.6 188.0,328.7 187.2,329.8 186.3,330.9 185.4,331.9 184.5,332.8 183.6,333.7 182.6,334.5 181.6,335.2 180.6,335.9 179.6,336.5 178.6,337.0 177.5,337.5 176.5,337.9 175.5,338.3 174.4,338.6 173.4,338.8 172.3,339.0 171.3,339.2 170.3,339.2 169.2,339.3 168.2,339.3 167.2,339.2 166.2,339.1 165.2,339.0 164.2,338.8 163.2,338.6 162.2,338.4 161.2,338.1 160.2,337.8 159.2,337.5 158.3,337.2 157.3,336.8 156.4,336.4 155.5,335.9 154.5,335.5 153.6,335.0 152.7,334.5 151.8,334.0 150.9,333.4 150.0,332.9 149.1,332.3 148.2,331.7 147.3,331.1 146.4,330.4 145.6,329.8 144.7,329.1 143.9,328.4 143.0,327.7 142.2,326.9 141.4,326.2 140.6,325.4 139.8,324.6 139.0,323.8 138.2,323.0 137.5,322.1 136.7,321.2 136.0,320.3 135.3,319.4 134.6,318.5 134.0,317.5 133.3,316.6 132.7,315.6 132.1,314.6 131.6,313.5 131.0,312.5 130.5,311.4 130.1,310.4 129.6,309.3 129.2,308.2 128.8,307.1 128.5,306.0 128.2,304.8 127.9,303.7 127.6,302.5 127.4,301.4 127.3,300.2 127.1,299.0 127.0,297.9 127.0,296.7 127.0,295.5" stroke="#000" stroke-width="1.1" fill="none" shape-rendering="geometricPrecision" stroke-linejoin="round"/>
<polyline points="196.9,308.0 195.4,301.5" stroke="#000" stroke-width="1.1" fill="none" shape-rendering="geometricPrecision" stroke-linejoin="round"/>
<path d="M744 295h1M744 292h1M744 289h1M744 286h1M744 283h1M743 280h1M743 277h1M743 274h1M742 271h1M742 268h1M741 265h1M741 263h1M740 260h1M740 257h1M739 254h1M738 251h1M737 248h1M737 245h1M736 242h1M735 240h1M734 237h1M733 234h1M732 231h1M730 229h1M729 226h1M728 223h1M727 220h1M725 218h1M724 215h1M723 213h1M721 210h1M720 207h1M718 205h1M717 202h1M715 200h1M713 197h1M712 195h1M710 193h1M708 190h1M706 188h1M704 186h1M702 183h1M700 181h1M698 179h1M696 177h1M694 175h1M692 173h1M690 171h1M688 169h1M686 167h1M683 165h1M681 163h1M679 161h1M676 159h1M674 157h1M672 156h1M669 154h1M667 152h1M664 151h1M662 149h1M659 148h1M656 146h1M654 145h1M651 144h1M649 142h1M646 141h1M643 140h1M640 139h1M638 137h1M635 136h1M632 135h1M629 134h1M627 133h1M624 132h1M621 132h1M618 131h1M615 130h1M612 129h1M609 129h1M606 128h1M604 128h1M601 127h1M598 127h1M595 126h1M592 126h1M589 126h1M586 125h1M583 125h1M580 125h1M577 125h1M574 125h1M571 125h1M568 125h1M565 125h1M562 125h1M559 126h1M556 126h1M553 126h1M550 127h1M547 127h1M544 128h1M542 128h1M539 129h1M536 129h1M533 130h1M530 131h1M527 132h1M524 132h1M521 133h1M519 134h1M516 135h1M513 136h1M510 137h1M508 139h1M505 140h1M502 141h1M499 142h1M497 144h1M494 145h1M492 146h1M489 148h1M486 149h1M484 151h1M481 152h1M479 154h1M476 156h1M474 157h1M472 159h1M469 161h1M467 163h1M465 165h1M462 167h1M460 169h1M458 171h1M456 173h1M454 175h1M452 177h1M450 179h1M448 181h1M446 183h1M444 186h1M442 188h1M440 190h1M438 193h1M436 195h1M435 197h1M433 200h1M431 202h1M430 205h1M428 207h1M427 210h1M425 213h1M424 215h1M423 218h1M421 220h1M420 223h1M419 226h1M418 229h1M416 231h1M415 234h1M414 237h1M413 240h1M412 242h1M411 245h1M411 248h1M410 251h1M409 254h1M408 257h1M408 260h1M407 263h1M407 265h1M406 268h1M406 271h1M405 274h1M405 277h1M405 280h1M404 283h1M404 286h1M404 289h1M404 292h1M404 295h1M669 295h1M669 292h1M669 288h1M668 285h1M668 282h1M667 279h1M667 275h1M666 272h1M665 269h1M664 266h1M663 263h1M662 259h1M661 256h1M659 253h1M658 250h1M656 248h1M655 245h1M653 242h1M651 239h1M649 237h1M647 234h1M645 231h1M642 229h1M640 227h1M638 224h1M635 222h1M632 220h1M630 218h1M627 216h1M624 214h1M621 213h1M619 211h1M616 210h1M613 208h1M610 207h1M606 206h1M603 205h1M600 204h1M597 203h1M594 202h1M590 202h1M587 201h1M584 201h1M581 200h1M577 200h1M574 200h1M571 200h1M567 200h1M564 201h1M561 201h1M558 202h1M554 202h1M551 203h1M548 204h1M545 205h1M542 206h1M538 207h1M535 208h1M532 210h1M529 211h1M527 213h1M524 214h1M521 216h1M518 218h1M516 220h1M513 222h1M510 224h1M508 227h1M506 229h1M503 231h1M501 234h1M499 237h1M497 239h1M495 242h1M493 245h1M492 248h1M490 250h1M489 253h1M487 256h1M486 259h1M485 263h1M484 266h1M483 269h1M482 272h1M481 275h1M481 279h1M480 282h1M480 285h1M479 288h1M479 292h1M479 295h1M627 295h1M627 290h1M626 286h1M625 281h1M624 277h1M622 273h1M620 268h1M617 265h1M615 261h1M611 258h1M608 254h1M604 252h1M601 249h1M596 247h1M592 245h1M588 244h1M583 243h1M579 242h1M574 242h1M569 242h1M565 243h1M560 244h1M556 245h1M552 247h1M547 249h1M544 252h1M540 254h1M537 258h1M533 261h1M531 265h1M528 268h1M526 273h1M524 277h1M523 281h1M522 286h1M521 290h1M521 295h1M604 295h1M603 292h1M603 289h1M602 286h1M601 283h1M600 280h1M598 278h1M596 275h1M594 273h1M591 271h1M589 269h1M586 268h1M583 267h1M580 266h1M577 266h1M574 265h1M571 266h1M568 266h1M565 267h1M562 268h1M559 269h1M557 271h1M554 273h1M552 275h1M550 278h1M548 280h1M547 283h1M546 286h1M545 289h1M545 292h1M544 295h1M591 295h1M590 292h1M590 289h1M588 287h1M587 284h1M585 282h1M582 281h1M580 279h1M577 279h1M574 278h1M571 279h1M568 279h1M566 281h1M563 282h1M561 284h1M560 287h1M558 289h1M558 292h1M557 295h1M584 295h1M583 292h1M581 289h1M579 287h1M576 285h1M572 285h1M569 287h1M567 289h1M565 292h1M564 295h1M734 295h1M725 295h1M717 295h1M709 295h1M701 295h1M694 295h1M687 295h1M681 295h1M675 295h1M664 295h1M658 295h1M654 295h1M649 295h1M645 295h1M641 295h1M637 295h1M634 295h1M630 295h1M621 295h1M616 295h1M611 295h1M607 295h1M598 295h1M594 295h1M732 267h1M723 269h1M715 270h1M707 272h1M699 273h1M692 274h1M685 275h1M679 276h1M673 278h1M662 279h1M657 280h1M652 281h1M648 282h1M644 283h1M640 283h1M636 284h1M633 285h1M629 285h1M620 287h1M615 288h1M611 289h1M607 289h1M603 290h1M598 291h1M594 292h1M725 240h1M716 243h1M708 246h1M701 249h1M693 252h1M687 254h1M680 256h1M674 259h1M669 261h1M658 264h1M653 266h1M649 268h1M645 269h1M641 271h1M637 272h1M633 273h1M630 275h1M627 276h1M618 279h1M613 281h1M609 282h1M605 284h1M602 285h1M597 287h1M593 288h1M713 215h1M705 219h1M698 224h1M691 228h1M684 231h1M678 235h1M672 238h1M666 242h1M661 245h1M652 250h1M647 253h1M643 255h1M639 257h1M635 260h1M632 262h1M629 263h1M626 265h1M623 267h1M615 271h1M610 274h1M606 276h1M603 278h1M595 283h1M591 285h1M697 192h1M690 198h1M683 203h1M677 208h1M671 213h1M666 218h1M661 222h1M656 226h1M651 230h1M643 237h1M639 241h1M635 244h1M632 247h1M628 249h1M625 252h1M622 254h1M620 257h1M617 259h1M610 265h1M606 268h1M603 271h1M599 274h1M597 276h1M593 279h1M589 282h1M677 172h1M671 179h1M666 186h1M661 192h1M656 198h1M651 203h1M647 208h1M643 213h1M639 218h1M632 226h1M628 230h1M625 234h1M622 237h1M620 241h1M617 244h1M615 247h1M612 249h1M610 252h1M604 259h1M601 263h1M598 266h1M595 270h1M593 272h1M590 276h1M587 280h1M654 156h1M650 164h1M645 171h1M641 178h1M638 185h1M634 191h1M631 197h1M627 203h1M624 208h1M619 217h1M616 222h1M614 226h1M612 230h1M609 234h1M607 237h1M606 240h1M604 243h1M602 246h1M598 254h1M595 259h1M593 263h1M591 266h1M586 274h1M584 278h1M629 144h1M626 153h1M623 161h1M620 168h1M617 176h1M615 182h1M613 189h1M610 195h1M608 200h1M605 211h1M603 216h1M601 220h1M600 224h1M598 228h1M597 232h1M596 236h1M594 239h1M593 242h1M590 251h1M588 256h1M587 260h1M585 264h1M584 267h1M582 272h1M581 276h1M602 137h1M600 146h1M599 154h1M597 162h1M596 170h1M595 177h1M594 184h1M593 190h1M591 196h1M590 207h1M589 212h1M588 217h1M587 221h1M586 225h1M586 229h1M585 233h1M584 236h1M584 240h1M582 249h1M581 254h1M580 258h1M580 262h1M579 266h1M578 271h1M577 275h1M574 135h1M574 144h1M574 152h1M574 160h1M574 168h1M574 175h1M574 182h1M574 188h1M574 194h1M574 205h1M574 211h1M574 215h1M574 220h1M574 224h1M574 228h1M574 232h1M574 235h1M574 239h1M574 248h1M574 253h1M574 258h1M574 262h1M574 271h1M574 275h1M546 137h1M548 146h1M549 154h1M551 162h1M552 170h1M553 177h1M554 184h1M555 190h1M557 196h1M558 207h1M559 212h1M560 217h1M561 221h1M562 225h1M562 229h1M563 233h1M564 236h1M564 240h1M566 249h1M567 254h1M568 258h1M568 262h1M569 266h1M570 271h1M571 275h1M519 144h1M522 153h1M525 161h1M528 168h1M531 176h1M533 182h1M535 189h1M538 195h1M540 200h1M543 211h1M545 216h1M547 220h1M548 224h1M550 228h1M551 232h1M552 236h1M554 239h1M555 242h1M558 251h1M560 256h1M561 260h1M563 264h1M564 267h1M566 272h1M567 276h1M494 156h1M498 164h1M503 171h1M507 178h1M510 185h1M514 191h1M517 197h1M521 203h1M524 208h1M529 217h1M532 222h1M534 226h1M536 230h1M539 234h1M541 237h1M542 240h1M544 243h1M546 246h1M550 254h1M553 259h1M555 263h1M557 266h1M562 274h1M564 278h1M471 172h1M477 179h1M482 186h1M487 192h1M492 198h1M497 203h1M501 208h1M505 213h1M509 218h1M516 226h1M520 230h1M523 234h1M526 237h1M528 241h1M531 244h1M533 247h1M536 249h1M538 252h1M544 259h1M547 263h1M550 266h1M553 270h1M555 272h1M558 276h1M561 280h1M451 192h1M458 198h1M465 203h1M471 208h1M477 213h1M482 218h1M487 222h1M492 226h1M497 230h1M505 237h1M509 241h1M513 244h1M516 247h1M520 249h1M523 252h1M526 254h1M528 257h1M531 259h1M538 265h1M542 268h1M545 271h1M549 274h1M551 276h1M555 279h1M559 282h1M435 215h1M443 219h1M450 224h1M457 228h1M464 231h1M470 235h1M476 238h1M482 242h1M487 245h1M496 250h1M501 253h1M505 255h1M509 257h1M513 260h1M516 262h1M519 263h1M522 265h1M525 267h1M533 271h1M538 274h1M542 276h1M545 278h1M553 283h1M557 285h1M423 240h1M432 243h1M440 246h1M447 249h1M455 252h1M461 254h1M468 256h1M474 259h1M479 261h1M490 264h1M495 266h1M499 268h1M503 269h1M507 271h1M511 272h1M515 273h1M518 275h1M521 276h1M530 279h1M535 281h1M539 282h1M543 284h1M546 285h1M551 287h1M555 288h1M416 267h1M425 269h1M433 270h1M441 272h1M449 273h1M456 274h1M463 275h1M469 276h1M475 278h1M486 279h1M491 280h1M496 281h1M500 282h1M504 283h1M508 283h1M512 284h1M515 285h1M519 285h1M528 287h1M533 288h1M537 289h1M541 289h1M545 290h1M550 291h1M554 292h1M414 295h1M423 295h1M431 295h1M439 295h1M447 295h1M454 295h1M461 295h1M467 295h1M473 295h1M484 295h1M490 295h1M494 295h1M499 295h1M503 295h1M507 295h1M511 295h1M514 295h1M518 295h1M527 295h1M532 295h1M537 295h1M541 295h1M550 295h1M554 295h1" stroke="#000" stroke-width="1" fill="none" transform="translate(0,.5)"/>
<path d="M717 295h1M717 290h1M716 285h1M716 280h1M715 275h1M715 270h1M714 265h1M712 260h1M711 256h1M710 251h1M708 246h1M706 242h1M704 237h1M702 232h1M700 228h1M698 224h1M695 219h1M692 215h1M689 211h1M686 207h1M683 203h1M680 199h1M677 196h1M673 192h1M670 189h1M666 186h1M662 183h1M658 180h1M654 177h1M650 174h1M645 171h1M641 169h1M637 167h1M632 165h1M627 163h1M623 161h1M618 159h1M613 158h1M609 157h1M604 155h1M599 154h1M594 154h1M589 153h1M584 153h1M579 152h1M574 152h1M569 152h1M564 153h1M559 153h1M554 154h1M549 154h1M544 155h1M539 157h1M535 158h1M530 159h1M525 161h1M521 163h1M516 165h1M511 167h1M507 169h1M503 171h1M498 174h1M494 177h1M490 180h1M486 183h1M482 186h1M478 189h1M475 192h1M471 196h1M468 199h1M465 203h1M462 207h1M459 211h1M456 215h1M453 219h1M450 224h1M448 228h1M446 232h1M444 237h1M442 242h1M440 246h1M438 251h1M437 256h1M436 260h1M434 265h1M433 270h1M433 275h1M432 280h1M432 285h1M431 290h1M431 295h1" stroke="#f00" stroke-width="1" fill="none" transform="translate(0,.5)"/>
<polyline points="543.3,295.4 543.3,295.3 542.5,295.2 541.4,295.1 540.0,295.0 538.6,294.9 537.1,294.8 535.6,294.6 534.1,294.4 532.6,294.2 531.1,294.0 529.5,293.8 527.9,293.5 526.3,293.2 524.7,292.8 523.1,292.4 521.5,292.0 519.9,291.5 518.4,290.9 517.0,290.4 515.6,289.8 514.3,289.1 513.1,288.5 511.9,287.8 510.9,287.1 510.1,286.5 509.4,285.9 508.9,285.4 508.5,284.9 508.3,284.4 508.3,283.9 508.5,283.5 508.9,283.1 509.6,282.7 510.5,282.3 511.6,281.9 512.7,281.6 513.9,281.4 515.2,281.2 516.6,281.1 518.1,281.0 519.7,281.0 521.4,281.0 523.2,281.1 525.1,281.2 527.2,281.4 529.3,281.7 531.5,282.0 533.6,282.3 535.6,282.7 537.5,283.1 539.3,283.6 541.0,284.1 542.8,284.7 544.6,285.2 546.4,285.8 548.4,286.4 550.6,287.2 552.9,287.9 555.0,288.6 556.7,289.2 558.0,289.6 558.0,289.6 556.9,289.2 555.3,288.7 553.5,288.2 551.6,287.5 549.6,286.8 547.9,286.1 546.3,285.4 544.8,284.6 543.3,283.8 541.7,282.9 540.2,282.0 538.7,281.1 537.1,280.1 535.5,279.1 533.9,278.1 532.3,277.0 530.8,275.9 529.4,274.9 528.0,273.9 526.7,272.8 525.4,271.7 524.2,270.7 523.2,269.7 522.4,268.8 521.8,268.0 521.4,267.3 521.1,266.6 520.9,266.0 520.9,265.4 520.9,264.9 521.0,264.4 521.2,263.9 521.6,263.5 522.0,263.1 522.5,262.8 523.2,262.6 524.0,262.4 524.9,262.3 526.0,262.3 527.1,262.3 528.2,262.4 529.4,262.6 530.6,262.8 531.8,263.1 533.1,263.4 534.4,263.8 535.7,264.3 537.1,264.9 538.6,265.6 540.1,266.4 541.8,267.4 543.4,268.3 544.9,269.3 546.4,270.3 547.8,271.3 549.1,272.3 550.3,273.3 551.6,274.3 552.8,275.4 554.1,276.5 555.5,277.7 557.0,279.0 558.5,280.4 559.9,281.7 561.1,282.7 561.9,283.5 561.9,283.5 561.2,282.8 560.3,281.9 559.2,280.8 558.0,279.7 556.8,278.5 555.7,277.3 554.7,276.2 553.6,275.1 552.6,274.0 551.6,272.8 550.5,271.6 549.5,270.3 548.5,268.9 547.4,267.4 546.3,265.8 545.3,264.2 544.3,262.6 543.3,261.0 542.3,259.5 541.3,257.9 540.4,256.4 539.5,254.9 538.6,253.3 537.9,251.8 537.3,250.2 536.7,248.6 536.2,247.0 535.8,245.4 535.5,243.9 535.3,242.5 535.1,241.3 535.1,240.1 535.1,239.1 535.2,238.1 535.4,237.2 535.6,236.3 535.9,235.5 536.3,234.7 536.8,234.0 537.3,233.4 538.0,232.9 538.7,232.4 539.5,232.0 540.5,231.7 541.6,231.5 542.6,231.3 543.7,231.3 544.8,231.3 545.8,231.4 546.8,231.6 547.8,231.8 548.8,232.2 549.9,232.6 551.0,233.2 552.2,233.9 553.5,234.7 554.8,235.6 556.1,236.6 557.5,237.6 558.8,238.6 560.1,239.7 561.4,240.8 562.7,242.0 563.9,243.2 565.2,244.4 566.5,245.6 567.8,246.8 569.2,248.1 570.5,249.4 571.9,250.7 573.1,252.0 574.2,253.3 575.2,254.5 576.1,255.7 577.0,257.0 577.7,258.2 578.4,259.5 578.9,261.0 579.3,262.6 579.5,264.4 579.6,266.3 579.6,268.2 579.6,270.1 579.6,271.9 579.6,273.7 579.4,275.7 579.3,277.6 579.1,279.3 579.0,280.8 578.9,281.9 578.1,282.3 578.3,281.6 578.6,280.7 578.9,279.6 579.3,278.3 579.8,276.9 580.4,275.4 581.2,273.7 582.0,271.9 583.0,269.9 584.0,267.8 585.1,265.8 586.2,263.8 587.3,261.9 588.4,260.0 589.5,258.1 590.7,256.2 591.9,254.3 593.2,252.2 594.6,250.0 596.1,247.6 597.7,245.2 599.3,242.8 600.9,240.5 602.5,238.3 604.1,236.3 605.6,234.3 607.2,232.4 608.7,230.6 610.3,229.0 611.8,227.4 613.4,225.9 615.0,224.5 616.5,223.2 618.1,222.1 619.6,221.1 621.0,220.4 622.3,219.9 623.7,219.8 624.9,219.8 626.1,219.9 627.1,220.0 628.0,220.2 628.7,220.4 629.3,220.5 629.8,220.8 630.2,221.1 630.5,221.5 630.8,222.0 631.0,222.5 631.2,223.1 631.2,223.8 631.2,224.6 631.1,225.6 630.8,226.7 630.4,228.1 629.9,229.7 629.2,231.4 628.5,233.2 627.7,235.2 626.8,237.1 625.8,239.1 624.8,241.2 623.7,243.4 622.5,245.6 621.2,247.8 619.9,249.9 618.4,252.0 616.6,254.3 614.8,256.5 613.1,258.5 611.6,260.3 610.6,261.5 610.6,261.5 611.4,260.7 612.6,259.5 613.9,258.2 615.4,256.7 617.1,255.2 618.7,253.8 620.4,252.4 622.1,251.1 624.0,249.7 626.0,248.2 628.1,246.7 630.3,245.2 632.7,243.5 635.4,241.8 638.1,240.0 640.9,238.2 643.7,236.4 646.5,234.8 649.2,233.3 652.0,231.8 654.8,230.4 657.5,229.1 660.2,227.8 662.8,226.7 665.3,225.7 667.6,224.8 669.9,224.0 672.2,223.3 674.4,222.6 676.7,222.0 679.1,221.4 681.6,220.8 684.1,220.3 686.5,219.9 688.7,219.5 690.6,219.3 692.2,219.2 693.6,219.1 694.8,219.2 695.8,219.3 696.7,219.5 697.6,219.7 698.4,220.0 699.2,220.3 699.8,220.7 700.3,221.1 700.8,221.5 701.1,222.0 701.4,222.5 701.6,222.9 701.7,223.4 701.7,223.9 701.5,224.6 701.1,225.5 700.6,226.5 699.9,227.7 699.1,229.0 698.1,230.5 696.8,232.0 695.3,233.6 693.5,235.3 691.4,237.2 689.1,239.2 686.6,241.2 684.0,243.2 681.3,245.2 678.5,247.1 675.6,249.1 672.6,251.0 669.5,252.9 666.2,254.9 662.8,256.8 659.2,258.7 655.4,260.7 651.4,262.6 647.4,264.6 643.5,266.5 639.6,268.4 635.6,270.4 631.4,272.5 627.1,274.6 623.3,276.5 620.0,278.1 617.6,279.3 617.6,279.3 618.7,279.0 620.1,278.5 621.8,278.0 623.7,277.4 625.8,276.8 628.0,276.1 630.3,275.4 632.9,274.6 635.6,273.8 638.4,273.0 641.3,272.2 644.2,271.4 647.2,270.6 650.2,269.8 653.4,269.0 656.5,268.3 659.7,267.5 662.8,266.8 665.9,266.1 669.0,265.4 672.0,264.8 675.1,264.2 678.2,263.6 681.3,263.1 684.4,262.6 687.5,262.2 690.6,261.8 693.7,261.4 696.8,261.1 699.9,260.8 703.1,260.5 706.3,260.3 709.5,260.1 712.6,259.9 715.7,259.8 718.5,259.8 721.2,259.8 723.7,259.9 726.2,260.1 728.5,260.2 730.5,260.5 732.4,260.8 734.0,261.2 735.4,261.6 736.6,262.1 737.6,262.6 738.5,263.2 739.3,263.8 740.0,264.5 740.7,265.2 741.1,265.9 741.5,266.7 741.7,267.5 741.7,268.4 741.5,269.3 741.2,270.2 740.8,271.2 740.1,272.2 739.3,273.2 738.2,274.2 736.9,275.2 735.5,276.2 733.9,277.1 732.1,278.1 730.0,279.1 727.7,280.0 725.1,280.9 722.3,281.8 719.2,282.7 716.0,283.5 712.6,284.3 709.2,285.1 705.6,285.9 701.8,286.6 697.9,287.3 693.9,288.0 689.9,288.7 686.0,289.3 682.1,289.9 678.3,290.4 674.4,291.0 670.5,291.4 666.7,291.9 662.8,292.3 659.0,292.7 655.3,293.0 651.6,293.2 647.9,293.5 643.9,293.7 639.6,293.9 634.8,294.1 629.7,294.3 624.3,294.5 618.9,294.7 613.9,294.9 609.4,295.0 605.3,295.1 601.4,295.2 597.8,295.3 594.6,295.3 592.0,295.4 590.0,295.4 543.3,295.4" stroke="#000" stroke-width="1.1" fill="none" shape-rendering="geometricPrecision" stroke-linejoin="round"/>
</svg></div>
<div class="a" style="left:12px;top:103px;width:12px;height:12px;background:#fff;border:1px solid;border-color:#808080 #d4d0c8 #d4d0c8 #808080;box-shadow:inset 1px 1px 0 #404040"></div>
<div class="a lbl" style="left:30.3px;top:103px;letter-spacing:-.25px">+90 dg</div>
<div class="a lbl" style="left:191.5px;top:108px">Y</div>
<div class="a lbl" style="left:190.5px;top:117.5px">0</div>
<div class="a lbl" style="left:186px;top:144.5px">-3</div>
<div class="a lbl" style="left:183px;top:192.5px">-10</div>
<div class="a lbl" style="left:183px;top:234.5px">-20</div>
<div class="a lbl" style="left:183px;top:257.5px">-30</div>
<div class="a lbl" style="left:183px;top:271.0px">-40</div>
<div class="a lbl" style="left:366.5px;top:289px">X</div>
<div class="a lbl" style="left:571.5px;top:108px">Z</div>
<div class="a lbl" style="left:570.5px;top:117.5px">0</div>
<div class="a lbl" style="left:566px;top:144.5px">-3</div>
<div class="a lbl" style="left:563px;top:192.5px">-10</div>
<div class="a lbl" style="left:563px;top:234.5px">-20</div>
<div class="a lbl" style="left:563px;top:257.5px">-30</div>
<div class="a lbl" style="left:563px;top:271.0px">-40</div>
<div class="a lbl" style="left:744.5px;top:289px">X</div>
<div class="a info" style="top:298.6px;letter-spacing:0.026px">Ga : 15.15 dBi = 0 dB  (H поляризация)</div>
<div class="a info" style="top:315.6px;letter-spacing:0.027px">F/B: 14.77 dB; Тыл: Азим. 120 гр, Элевация 60 гр</div>
<div class="a info" style="top:332.6px;letter-spacing:0.015px">F: 145.000 МГц</div>
<div class="a info" style="top:349.6px;letter-spacing:0.008px">Z: 47.404 + j0.167 Ом</div>
<div class="a info" style="top:366.6px;letter-spacing:0.061px">КСВ: 1.1 (50.0 Ом),</div>
<div class="a info" style="top:383.6px;letter-spacing:0.069px">Elev. гр.: 9.5 гр. (Реал. земля. Высота = 3.00 м)</div>
<div class="a btn" style="left:104px;top:508px;width:121px;height:21px"></div><div class="a lbl" style="left:123px;top:511.3px;line-height:15px;letter-spacing:-0.081px">Зенитный угол</div>
<div class="a btn" style="left:234px;top:508px;width:113px;height:21px"></div><div class="a lbl" style="left:268px;top:511.3px;line-height:15px;letter-spacing:0.277px">3Д   ДН</div>
<div class="a btn" style="left:665px;top:508px;width:86px;height:21px"></div><div class="a lbl" style="left:689px;top:511.3px;line-height:15px;letter-spacing:-0.166px">Печать</div>
<div class="a" style="left:358px;top:508px;width:297px;height:26px;border:1px solid #fff"></div>
<div class="a" style="left:358px;top:508px;width:296px;height:25px;border:1px solid #808080;box-shadow:inset 1px 1px 0 #fff"></div>
<div class="a lbl" style="left:367px;top:501.5px;line-height:15px;background:#d4d0c8;padding:0 1px 0 3.2px;letter-spacing:-0.099px">Показать ДН для поляризации</div>
<div class="a radio" style="left:367px;top:518px"></div>
<div class="a lbl" style="left:384.6px;top:516px;line-height:15px;letter-spacing:0.128px">V</div>
<div class="a radio" style="left:438px;top:518px"></div>
<div class="a lbl" style="left:454.4px;top:516px;line-height:15px;letter-spacing:0.409px">H</div>
<div class="a radio" style="left:509px;top:518px"><div class="a" style="left:3px;top:3px;width:4px;height:4px;border-radius:50%;background:#000"></div></div>
<div class="a lbl" style="left:525.8px;top:516px;line-height:15px;letter-spacing:-0.054px">Total</div>
<div class="a radio" style="left:580px;top:518px"></div>
<div class="a lbl" style="left:597.2px;top:516px;line-height:15px;letter-spacing:-0.152px">V+H</div>
</div>
</body></html>
